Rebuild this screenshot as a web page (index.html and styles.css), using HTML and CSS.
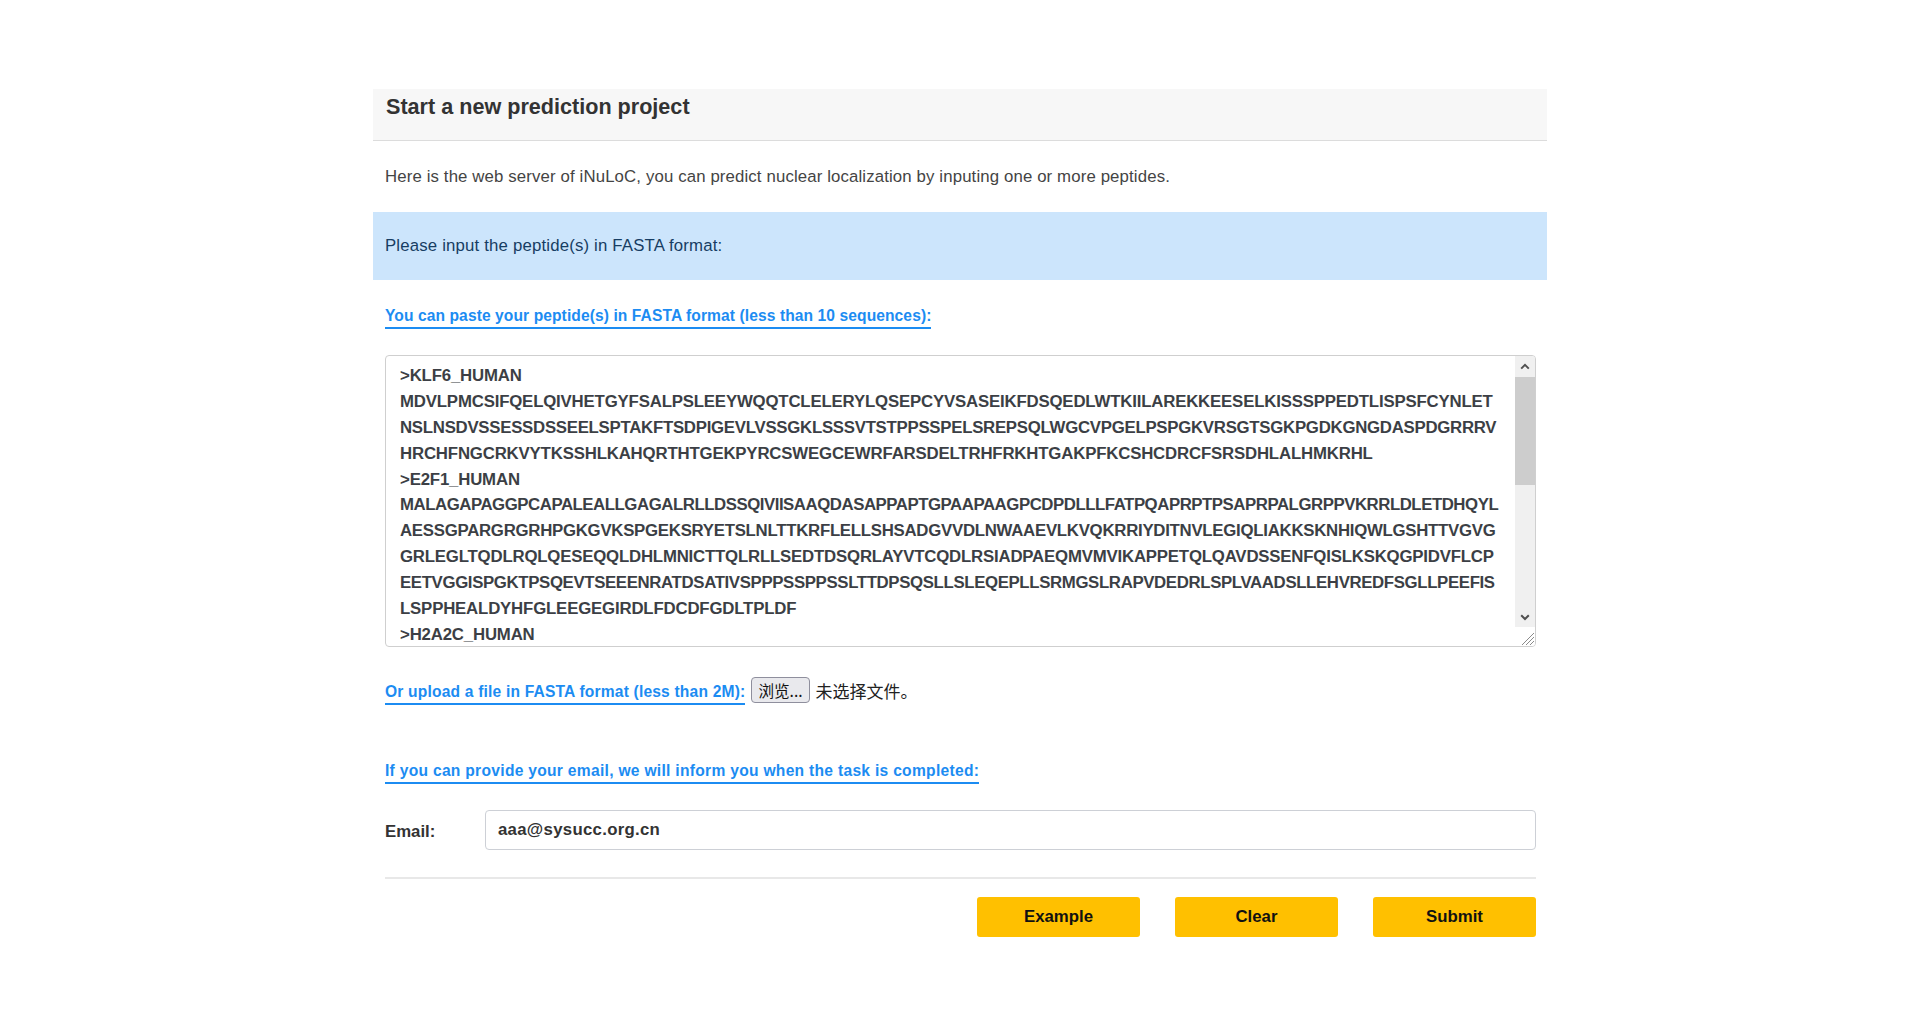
FILE: index.html
```html
<!DOCTYPE html>
<html lang="en">
<head>
<meta charset="utf-8">
<title>iNuLoC - Start a new prediction project</title>
<link rel="stylesheet" href="styles.css">
</head>
<body>
<div class="page">
  <div class="panel-heading">Start a new prediction project</div>
  <p class="intro">Here is the web server of iNuLoC, you can predict nuclear localization by inputing one or more peptides.</p>
  <div class="alert">Please input the peptide(s) in FASTA format:</div>
  <div class="body">
    <div class="section-title"><span class="link link-paste">You can paste your peptide(s) in FASTA format (less than 10 sequences):</span></div>
    <div class="seqbox">
      <div class="seq" role="textbox" aria-multiline="true" contenteditable="true" spellcheck="false">
        <div class="ln">&gt;KLF6_HUMAN</div>
        <div class="ln">MDVLPMCSIFQELQIVHETGYFSALPSLEEYWQQTCLELERYLQSEPCYVSASEIKFDSQEDLWTKIILAREKKEESELKISSSPPEDTLISPSFCYNLET</div>
        <div class="ln tight-2">NSLNSDVSSESSDSSEELSPTAKFTSDPIGEVLVSSGKLSSSVTSTPPSSPELSREPSQLWGCVPGELPSPGKVRSGTSGKPGDKGNGDASPDGRRRV</div>
        <div class="ln">HRCHFNGCRKVYTKSSHLKAHQRTHTGEKPYRCSWEGCEWRFARSDELTRHFRKHTGAKPFKCSHCDRCFSRSDHLALHMKRHL</div>
        <div class="ln">&gt;E2F1_HUMAN</div>
        <div class="ln tight-5">MALAGAPAGGPCAPALEALLGAGALRLLDSSQIVIISAAQDASAPPAPTGPAAPAAGPCDPDLLLFATPQAPRPTPSAPRPALGRPPVKRRLDLETDHQYL</div>
        <div class="ln tight-2">AESSGPARGRGRHPGKGVKSPGEKSRYETSLNLTTKRFLELLSHSADGVVDLNWAAEVLKVQKRRIYDITNVLEGIQLIAKKSKNHIQWLGSHTTVGVG</div>
        <div class="ln tight-1">GRLEGLTQDLRQLQESEQQLDHLMNICTTQLRLLSEDTDSQRLAYVTCQDLRSIADPAEQMVMVIKAPPETQLQAVDSSENFQISLKSKQGPIDVFLCP</div>
        <div class="ln tight-4">EETVGGISPGKTPSQEVTSEEENRATDSATIVSPPPSSPPSSLTTDPSQSLLSLEQEPLLSRMGSLRAPVDEDRLSPLVAADSLLEHVREDFSGLLPEEFIS</div>
        <div class="ln">LSPPHEALDYHFGLEEGEGIRDLFDCDFGDLTPLDF</div>
        <div class="ln">&gt;H2A2C_HUMAN</div>
        <div class="ln">MSGRGKQGGKARAKAKSRSSRAGLQFPVGRVHRLLRKGNYAERVGAGAPVYLAAVLEYLTAEILELAGNAARDNKKTRIIPRHLQLAIRNDEELNKLLG</div>
        <div class="ln">KVTIAQGGVLPNIQSVLLPKKTESSKSAKSK</div>
      </div>
      <div class="scrollbar">
        <div class="sb-btn">
          <svg width="20" height="21" viewBox="0 0 20 21"><path d="M6.2 12.6 L10 8.8 L13.8 12.6" fill="none" stroke="#505050" stroke-width="2"/></svg>
        </div>
        <div class="sb-track"><div class="sb-thumb"></div></div>
        <div class="sb-btn">
          <svg width="20" height="20" viewBox="0 0 20 20"><path d="M6.2 8.2 L10 12 L13.8 8.2" fill="none" stroke="#505050" stroke-width="2"/></svg>
        </div>
        <div class="sb-corner">
          <svg width="20" height="19" viewBox="0 0 20 19"><path d="M19 6 L7 18 M19 10 L11 18 M19 14 L15 18" fill="none" stroke="#8a8a8a" stroke-width="1"/></svg>
        </div>
      </div>
    </div>
    <div class="upload-row">
      <span class="link link-upload">Or upload a file in FASTA format (less than 2M):</span>
      <span class="file-btn">浏览...</span>
      <span class="file-name">未选择文件。</span>
    </div>
    <div class="section-title email-title"><span class="link link-email">If you can provide your email, we will inform you when the task is completed:</span></div>
    <div class="email-row">
      <span class="email-label">Email:</span>
      <div class="email-input">aaa@sysucc.org.cn</div>
    </div>
    <div class="divider"></div>
    <div class="actions">
      <button class="btn">Example</button>
      <button class="btn">Clear</button>
      <button class="btn">Submit</button>
    </div>
  </div>
</div>
</body>
</html>
```

FILE: styles.css
```css
html, body {
  margin: 0;
  padding: 0;
  background: #ffffff;
}

body {
  font-family: "Liberation Sans", Arial, "Noto Sans CJK SC", sans-serif;
  color: #333333;
}

.page {
  width: 1174px;
  margin: 0 auto;
  padding-top: 89px;
}

.panel-heading {
  background: #f7f7f7;
  border-bottom: 1px solid #dcdcdc;
  padding: 6px 13px 21px;
  font-size: 21.6px;
  line-height: 24px;
  font-weight: bold;
  color: #333333;
}

.intro {
  margin: 0;
  padding: 24px 12px 23px;
  font-size: 16.8px;
  line-height: 24px;
  letter-spacing: 0.13px;
  color: #444444;
}

.alert {
  background: #cce5fc;
  padding: 22px 12px;
  font-size: 16.8px;
  line-height: 24px;
  letter-spacing: 0.17px;
  color: #173d63;
}

.body {
  padding: 0 11px 0 12px;
}

.section-title {
  margin-top: 27px;
  font-size: 15.6px;
  line-height: 18px;
  font-weight: bold;
}

.link {
  display: inline-block;
  font-size: 15.6px;
  line-height: 18px;
  font-weight: bold;
  color: #1c8cf2;
  padding-bottom: 2px;
  border-bottom: 2px solid #1c8cf2;
}

.link-paste {
  letter-spacing: 0.085px;
}

.link-upload {
  letter-spacing: 0.18px;
}

.link-email {
  letter-spacing: 0.29px;
}

.seqbox {
  margin-top: 26px;
  height: 292px;
  box-sizing: border-box;
  border: 1px solid #cfcfcf;
  border-radius: 4px;
  display: flex;
  overflow: hidden;
  background: #ffffff;
}

.seq {
  flex: 1;
  min-width: 0;
  overflow: hidden;
  outline: none;
  padding: 7px 0 0 14px;
  font-family: "Liberation Sans", Arial, sans-serif;
  font-size: 16.8px;
  font-weight: bold;
  line-height: 25.9px;
  letter-spacing: -0.17px;
  color: #3c3f45;
}

.ln {
  height: 25.9px;
  white-space: pre;
}

.tight-1 {
  letter-spacing: -0.19px;
}

.tight-2 {
  letter-spacing: -0.26px;
}

.tight-4 {
  letter-spacing: -0.35px;
}

.tight-5 {
  letter-spacing: -0.45px;
}

.scrollbar {
  width: 20px;
  display: flex;
  flex-direction: column;
  flex: none;
}

.sb-btn {
  background: #f0f0f0;
  line-height: 0;
}

.sb-track {
  flex: 1;
  background: #f0f0f0;
}

.sb-thumb {
  height: 108px;
  background: #cdcdcd;
}

.sb-corner {
  height: 19px;
  background: #ffffff;
  line-height: 0;
}

.upload-row {
  margin-top: 30px;
  display: flex;
  align-items: flex-start;
}

.upload-row .link {
  margin-top: 5.6px;
}

.file-btn {
  margin-left: 6px;
  height: 26px;
  box-sizing: border-box;
  padding: 0 6px;
  border: 1px solid #8f8f9d;
  border-radius: 4px;
  background: #e9e9ed;
  font-family: "Noto Sans CJK SC", sans-serif;
  font-size: 15.6px;
  line-height: 24px;
  color: #111111;
}

.file-name {
  margin-left: 6px;
  font-family: "Noto Sans CJK SC", sans-serif;
  font-size: 17px;
  line-height: 26px;
  margin-top: 1px;
  color: #222222;
}

.email-title {
  margin-top: 57px;
}

.email-row {
  margin-top: 26px;
  display: flex;
  align-items: center;
}

.email-label {
  width: 100px;
  flex: none;
  padding-top: 4px;
  font-size: 16.8px;
  line-height: 24px;
  font-weight: bold;
  color: #333333;
}

.email-input {
  flex: 1;
  height: 40px;
  box-sizing: border-box;
  border: 1px solid #cdd0d6;
  border-radius: 4px;
  padding: 0 12px;
  font-size: 16.8px;
  line-height: 38px;
  font-weight: bold;
  letter-spacing: 0.29px;
  color: #333333;
}

.divider {
  margin-top: 27px;
  height: 2px;
  background: #e8e8e8;
}

.actions {
  margin-top: 18px;
  display: flex;
  justify-content: flex-end;
  gap: 35px;
}

.btn {
  width: 163px;
  height: 40px;
  border: none;
  border-radius: 3px;
  background: #ffc000;
  font-family: "Liberation Sans", Arial, sans-serif;
  font-size: 16.8px;
  font-weight: bold;
  color: #111111;
  padding: 0;
  cursor: pointer;
}
```
